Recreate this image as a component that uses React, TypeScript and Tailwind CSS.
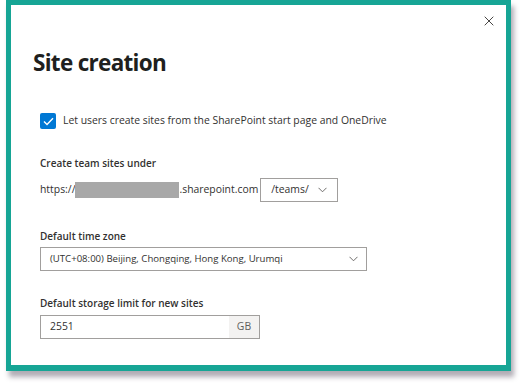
import { useState } from "react";

const font = { fontFamily: '"Open Sans", "Noto Sans", sans-serif' };

const Chevron = () => (
  <svg width="9" height="6" viewBox="0 0 9 6" fill="none">
    <path d="M0.5 0.8 L4.5 4.8 L8.5 0.8" stroke="#605e5c" strokeWidth="0.9" />
  </svg>
);

const CloseIcon = () => (
  <svg width="10" height="10" viewBox="0 0 10 10" fill="none">
    <path d="M0.7 0.7 L9.3 9.3 M9.3 0.7 L0.7 9.3" stroke="#484644" strokeWidth="1" />
  </svg>
);

const CheckBox = ({ checked, onToggle }: { checked: boolean; onToggle: () => void }) => (
  <button
    onClick={onToggle}
    className={
      checked
        ? "w-[16px] h-[16px] bg-[#0078d4] rounded-[2px] flex items-center justify-center"
        : "w-[16px] h-[16px] border border-[#323130] rounded-[2px]"
    }
  >
    {checked && (
      <svg width="11" height="9" viewBox="0 0 11 9" fill="none">
        <path d="M1 4.6 L4 7.5 L10 1.2" stroke="#ffffff" strokeWidth="1.4" />
      </svg>
    )}
  </button>
);

export default function App() {
  const [allow, setAllow] = useState(true);

  return (
    <div className="w-[520px] h-[386px] bg-white pl-[6px]" style={font}>
      <div className="w-[505px] h-[371px] border-[5px] border-b-[6px] border-[#16a595] bg-white shadow-[3px_6px_5px_rgba(60,50,70,0.4)] flex flex-col text-[#323130]">
        <div className="h-[32px] flex items-center justify-end pr-[12px]">
          <CloseIcon />
        </div>

        <h1 className="mt-[10px] ml-[22px] text-[22.5px] leading-[32px] font-bold tracking-[-0.7px] text-[#201f1e]">
          Site creation
        </h1>

        <div className="pl-[29px] flex flex-col">
          <label className="mt-[34px] h-[16px] flex items-center gap-[7px] text-[10.4px]">
            <CheckBox checked={allow} onToggle={() => setAllow(!allow)} />
            <span>Let users create sites from the SharePoint start page and OneDrive</span>
          </label>

          <div className="mt-[27px] text-[10px] leading-[14px] font-semibold">Create team sites under</div>
          <div className="mt-[8px] h-[24px] flex items-center text-[10.4px]">
            <span>https://</span>
            <span className="w-[104px] h-[16px] bg-[#a8a8a8]" />
            <span>.sharepoint.com</span>
            <div className="ml-[2px] w-[78px] h-[24px] border border-[#a19f9d] flex items-center justify-between pl-[10px] pr-[10px]">
              <span>/teams/</span>
              <Chevron />
            </div>
          </div>

          <div className="mt-[27px] text-[10px] leading-[14px] font-semibold">Default time zone</div>
          <div className="mt-[4px] w-[327px] h-[24px] border border-[#a19f9d] flex items-center justify-between pl-[9px] pr-[8px] text-[9.6px]">
            <span>(UTC+08:00) Beijing, Chongqing, Hong Kong, Urumqi</span>
            <Chevron />
          </div>

          <div className="mt-[25px] text-[10px] leading-[14px] font-semibold">Default storage limit for new sites</div>
          <div className="mt-[5px] w-[220px] h-[24px] border border-[#a19f9d] flex text-[10.4px]">
            <div className="flex-1 flex items-center pl-[9px]">2551</div>
            <div className="w-[30px] bg-[#f3f2f1] flex items-center justify-center text-[#605e5c]">GB</div>
          </div>
        </div>
      </div>
    </div>
  );
}
